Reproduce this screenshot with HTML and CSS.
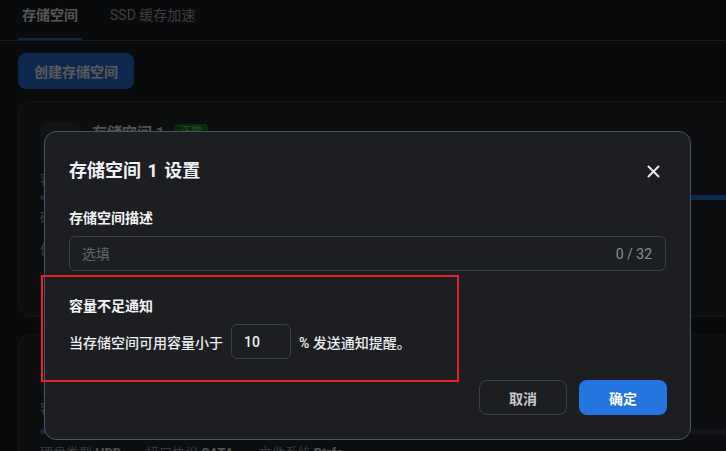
FILE: index.html
```html
<!DOCTYPE html>
<html lang="zh-CN">
<head>
  <meta charset="UTF-8" />
  <meta name="viewport" content="width=device-width, initial-scale=1.0" />
  <title>存储空间</title>
  <link rel="stylesheet" href="styles.css">
</head>
<body>

<div class="page">
  <!-- Tabs -->
  <div class="tabs">
    <div class="tab active">存储空间</div>
    <div class="tab">SSD 缓存加速</div>
  </div>

  <button class="create-button">创建存储空间</button>

  <!-- Pool cards -->
  <div class="card">
    <div class="card-head">
      <div class="card-icon"></div>
      <div class="card-title">存储空间 1</div>
      <span class="badge">正常</span>
    </div>
    <p class="card-line first">容量使用 1.21 TB / 3.58 TB</p>
    <div class="bar"><div class="bar-fill" style="width: 100%"></div></div>
    <p class="card-line">硬盘 2 块，RAID 1</p>
    <p class="card-line gap">使用此存储空间的共享文件夹</p>
    <div class="select-box"></div>
  </div>

  <div class="card second">
    <div class="card-head">
      <div class="card-icon"></div>
      <div class="card-title">存储空间 2</div>
      <span class="badge">正常</span>
    </div>
    <p class="card-line tight">容量使用 0.52 TB / 1.79 TB</p>
    <div class="bar spaced"><div class="bar-fill" style="width: 30%"></div></div>
    <div class="info-row">
      <span>硬盘类型 <b>HDD</b></span>
      <span>接口协议 <b>SATA</b></span>
      <span>文件系统 <b>Btrfs</b></span>
    </div>
  </div>
</div>

<div class="mask"></div>

<!-- Settings dialog -->
<div class="modal">
  <div class="modal-head">
    <h2>存储空间 1 设置</h2>
    <button class="close-button" aria-label="关闭">
      <svg width="13" height="13" viewBox="0 0 13 13">
        <path d="M1.5 1.5 L11.5 11.5 M11.5 1.5 L1.5 11.5" stroke="#e6e8eb" stroke-width="2" stroke-linecap="round" fill="none"/>
      </svg>
    </button>
  </div>

  <label class="field-label">存储空间描述</label>
  <div class="text-input">
    <input type="text" placeholder="选填" />
    <span class="counter">0 / 32</span>
  </div>

  <div class="notify">
    <div class="field-label">容量不足通知</div>
    <div class="notify-row">
      <span>当存储空间可用容量小于</span>
      <input class="number-input" type="text" value="10" />
      <span>% 发送通知提醒。</span>
    </div>
  </div>

  <div class="modal-footer">
    <button class="btn-cancel">取消</button>
    <button class="btn-ok">确定</button>
  </div>
</div>

</body>
</html>
```

FILE: styles.css
```css
html, body {
  margin: 0;
  overflow: hidden;
}

body {
  font-family: Roboto, "Noto Sans CJK SC", sans-serif;
  background-color: #1c1f24;
  color: #e8eaed;
  height: 451px;
}

.page {
  width: 860px;
  padding: 0 18px;
}

/* Tabs */
.tabs {
  display: flex;
  gap: 24px;
  height: 40px;
  border-bottom: 1px solid #464a52;
  margin: 0 -18px;
  padding: 0 18px;
}

.tab {
  padding: 5px 4px 0;
  font-size: 14px;
  line-height: 20px;
  color: #aeb1b6;
  border-bottom: 2px solid transparent;
  height: 33px;
}

.tab.active {
  color: #f0f2f5;
  font-weight: bold;
  border-bottom-color: #2474e0;
}

.create-button {
  margin-top: 12px;
  height: 36px;
  padding: 0 16px;
  border: none;
  border-radius: 8px;
  background-color: #2474e0;
  color: #ffffff;
  font-family: inherit;
  font-size: 14px;
  font-weight: bold;
}

/* Cards */
.card {
  margin-top: 12px;
  background-color: #22262b;
  border: 1px solid #363a41;
  border-radius: 12px;
  padding: 20px 21px 16px;
}

.card.second {
  margin-top: 17px;
}

.card-head {
  display: flex;
  align-items: flex-start;
  gap: 10px;
}

.card-icon {
  width: 42px;
  height: 43px;
  border-radius: 8px;
  background-color: #31343a;
}

.card-title {
  font-size: 15px;
  line-height: 20px;
  font-weight: bold;
  margin-top: 1px;
}

.badge {
  margin-top: 2px;
  padding: 0 6px;
  font-size: 11px;
  line-height: 15px;
  border-radius: 4px;
  background-color: #227822;
  color: #6be07a;
}

.card-line {
  margin: 9px 0 0;
  font-size: 13px;
  line-height: 18px;
  color: #b4b8bf;
}

.card-line.first {
  margin-top: 6px;
}

.card-line.gap {
  margin-top: 14px;
}

.card-line.tight {
  margin-top: 2px;
}

.bar {
  margin-top: 6px;
  height: 5px;
  border-radius: 3px;
  background-color: #3a3e45;
  overflow: hidden;
}

.bar.spaced {
  margin-top: 11px;
}

.bar-fill {
  height: 100%;
  background-color: #2474e0;
  border-radius: 3px;
}

.select-box {
  margin-top: 4px;
  width: 220px;
  height: 37px;
  border: 1px solid #3b4048;
  border-radius: 8px;
  box-sizing: border-box;
}

.info-row {
  display: flex;
  gap: 25px;
  margin-top: 10px;
  font-size: 13px;
  line-height: 18px;
  color: #9ca1a8;
}

.info-row b {
  color: #e8eaed;
}

/* Overlay */
.mask {
  position: fixed;
  inset: 0;
  background-color: rgba(0, 0, 0, 0.65);
}

/* Dialog */
.modal {
  position: fixed;
  top: 131px;
  left: 44px;
  width: 647px;
  box-sizing: border-box;
  padding: 27px 24px 24px;
  background-color: #1c1e22;
  border: 1px solid #4b5260;
  border-radius: 12px;
}

.modal-head {
  display: flex;
  justify-content: space-between;
  align-items: center;
  height: 24px;
}

.modal-head h2 {
  margin: 0;
  font-size: 18px;
  line-height: 24px;
  font-weight: bold;
  color: #f2f3f5;
  word-spacing: 2px;
}

.close-button {
  width: 26px;
  height: 26px;
  padding: 0;
  border: none;
  background: none;
  display: flex;
  align-items: center;
  justify-content: center;
}

.field-label {
  display: block;
  margin-top: 25px;
  font-size: 14px;
  line-height: 20px;
  font-weight: bold;
  color: #f2f3f5;
}

.text-input {
  display: flex;
  align-items: center;
  margin-top: 8px;
  height: 35px;
  box-sizing: border-box;
  border: 1px solid #3b4048;
  border-radius: 6px;
  padding: 0 13px 0 12px;
}

.text-input input {
  flex: 1;
  border: none;
  background: none;
  padding: 0;
  font-family: inherit;
  font-size: 14px;
  color: #e8eaed;
}

.text-input input::placeholder {
  color: #5f646c;
}

.text-input input:focus {
  outline: none;
}

.counter {
  font-size: 14px;
  color: #8a9099;
}

.notify {
  position: relative;
  padding-top: 1px;
  margin-top: -1px;
}

/* red highlight frame around the section */
.notify::after {
  content: "";
  position: absolute;
  top: 5px;
  left: -28px;
  width: 418px;
  height: 107px;
  box-sizing: border-box;
  border: 2px solid #e5212b;
}

.notify-row {
  display: flex;
  align-items: center;
  margin-top: 8px;
  font-size: 14px;
  font-weight: 500;
  color: #eceef1;
}

.number-input {
  width: 60px;
  height: 35px;
  box-sizing: border-box;
  margin: 0 8px;
  padding: 0 12px;
  border: 1px solid #3b4048;
  border-radius: 6px;
  background: none;
  font-family: inherit;
  font-size: 14px;
  font-weight: 500;
  color: #eceef1;
}

.modal-footer {
  display: flex;
  justify-content: flex-end;
  gap: 12px;
  margin-top: 21px;
  margin-right: -1px;
}

.modal-footer button {
  width: 88px;
  height: 35px;
  border-radius: 8px;
  font-family: inherit;
  font-size: 14px;
  font-weight: bold;
}

.btn-cancel {
  background: none;
  border: 1px solid #3b4048;
  color: #c5c9d0;
}

.btn-ok {
  background-color: #2475e0;
  border: none;
  color: #ffffff;
}
```
